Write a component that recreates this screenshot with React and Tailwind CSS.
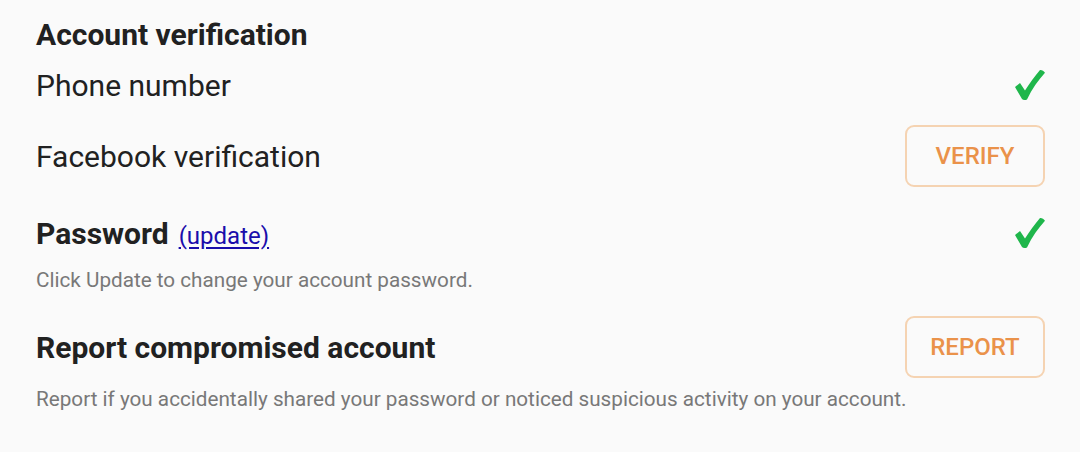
import React from "react";

const Check = () => (
  <svg width="32" height="34" viewBox="0 0 32 34" className="shrink-0 mr-[-1px]">
    <path
      d="M1 19 L6 15 L11 22.5 C15.5 15.5 20.5 8.5 26 2 C27.8 1.8 30 3 31 4.8 C24.5 12 18 21 13 31.5 C11.2 32.3 9 32.2 8 31 Z"
      fill="#1fb64b"
    />
  </svg>
);

const OutlineButton = ({ children }) => (
  <button className="w-[140px] h-[62px] rounded-[9px] border-2 border-[#f5d3b2] bg-transparent text-[#ea924a] text-[24px] font-medium flex items-center justify-center">
    {children}
  </button>
);

export default function App() {
  return (
    <div
      className="w-[1080px] h-[452px] bg-[#fafafa] text-[#212121] pl-[36px] pr-[35px] pt-[15px]"
      style={{ fontFamily: "Roboto, 'Liberation Sans', sans-serif" }}
    >
      {/* Account verification */}
      <h2 className="text-[30px] leading-[40px] font-bold">Account verification</h2>

      <div className="h-[60px] flex items-center justify-between">
        <span className="text-[30px] text-[#212121]">Phone number</span>
        <Check />
      </div>

      <div className="mt-[10px] h-[62px] flex items-center justify-between">
        <span className="text-[30px] text-[#212121]">Facebook verification</span>
        <OutlineButton>VERIFY</OutlineButton>
      </div>

      {/* Password */}
      <div className="mt-[26px] h-[40px] flex items-center justify-between">
        <div className="flex items-baseline gap-[10px]">
          <span className="text-[30px] font-bold">Password</span>
          <a href="#" className="text-[24px] text-[#1a0dab] underline underline-offset-[3px]">
            (update)
          </a>
        </div>
        <Check />
      </div>
      <p className="mt-[13px] text-[20.7px] leading-[28px] text-[#787878]">
        Click Update to change your account password.
      </p>

      {/* Report */}
      <div className="mt-[22px] h-[62px] flex items-center justify-between">
        <span className="text-[30px] font-bold">Report compromised account</span>
        <OutlineButton>REPORT</OutlineButton>
      </div>
      <p className="mt-[7px] text-[20.7px] leading-[28px] text-[#787878]">
        Report if you accidentally shared your password or noticed suspicious activity on your account.
      </p>
    </div>
  );
}
